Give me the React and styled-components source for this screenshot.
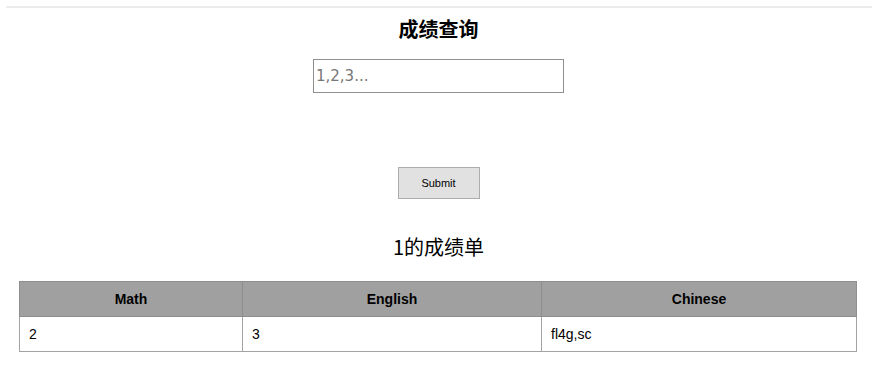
import styled, { createGlobalStyle } from "styled-components";

const Global = createGlobalStyle`
  html, body {
    margin: 0;
    padding: 0;
    background: #fff;
  }
  body {
    font-family: "Liberation Sans", "Noto Sans CJK SC", sans-serif;
    color: #000;
  }
`;

const Page = styled.div`
  display: flex;
  flex-direction: column;
  align-items: center;
  padding: 6px 0 0 5px;
`;

const TopRule = styled.div`
  align-self: stretch;
  margin-left: 1px;
  border-top: 2px solid #ececec;
`;

const Title = styled.h2`
  margin: 7px 0 0;
  font-family: "Noto Sans CJK SC", sans-serif;
  font-size: 20px;
  font-weight: 700;
  line-height: 28px;
`;

const Form = styled.form`
  display: flex;
  flex-direction: column;
  align-items: center;
`;

const Input = styled.input`
  box-sizing: border-box;
  width: 251px;
  height: 34px;
  margin-top: 16px;
  padding: 0 2px;
  border: 1px solid #8f8f8f;
  font-family: "DejaVu Sans", sans-serif;
  font-size: 15px;
  outline: none;
  &::placeholder {
    color: #777;
  }
`;

const Button = styled.button`
  box-sizing: border-box;
  width: 82px;
  height: 32px;
  margin-top: 74px;
  background: #e1e1e1;
  border: 1px solid #adadad;
  font-family: "Liberation Sans", sans-serif;
  font-size: 11px;
  color: #000;
`;

const Caption = styled.h3`
  margin: 34px 0 0;
  font-family: "Noto Sans CJK SC", sans-serif;
  font-size: 20px;
  font-weight: 400;
  line-height: 28px;
`;

const Table = styled.table`
  align-self: stretch;
  margin: 20px 15px 0 14px;
  border-collapse: collapse;
  border: 1px solid #a3a3a3;
  font-size: 14px;
`;

const Head = styled.th`
  height: 34px;
  padding: 0;
  background: #a0a0a0;
  border: 1px solid #8e8e8e;
  font-weight: 700;
  text-align: center;
  width: ${(p) => p.$w};
`;

const Cell = styled.td`
  height: 34px;
  padding: 0 9px;
  border: 1px solid #a3a3a3;
  text-align: left;
`;

const scores = { Math: "2", English: "3", Chinese: "fl4g,sc" };
const widths = { Math: "222px", English: "298px", Chinese: "auto" };

export default function App() {
  return (
    <>
      <Global />
      <Page>
        <TopRule />
        <Title>成绩查询</Title>
        <Form onSubmit={(e) => e.preventDefault()}>
          <Input placeholder="1,2,3..." />
          <Button type="submit">Submit</Button>
        </Form>
        <Caption>1的成绩单</Caption>
        <Table>
          <thead>
            <tr>
              {Object.keys(scores).map((k) => (
                <Head key={k} $w={widths[k]}>
                  {k}
                </Head>
              ))}
            </tr>
          </thead>
          <tbody>
            <tr>
              {Object.values(scores).map((v, i) => (
                <Cell key={i}>{v}</Cell>
              ))}
            </tr>
          </tbody>
        </Table>
      </Page>
    </>
  );
}
